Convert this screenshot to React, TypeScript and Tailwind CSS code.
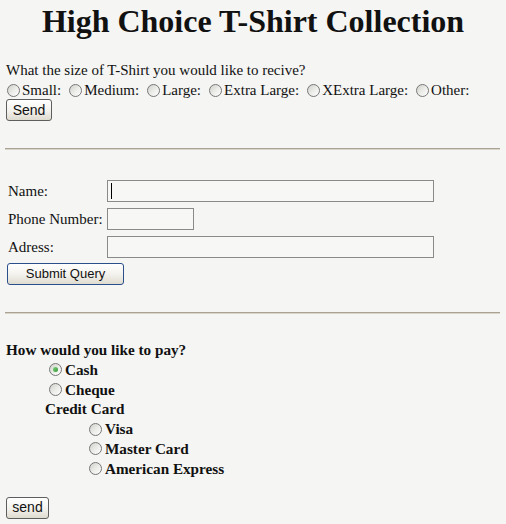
import React from "react";

const serif = { fontFamily: '"Liberation Serif", "Times New Roman", serif' };

function Radio({ checked = false }: { checked?: boolean }) {
  return (
    <span className="flex h-[13px] w-[13px] shrink-0 items-center justify-center rounded-full border border-[#777] bg-gradient-to-br from-[#cfcfcb] via-[#ebebe8] to-[#ffffff]">
      {checked ? (
        <span className="h-[5px] w-[5px] rounded-full bg-gradient-to-br from-[#7fd07f] to-[#2f9a2f]" />
      ) : null}
    </span>
  );
}

function XPButton({
  label,
  className,
  blue = false,
  size = "text-[14px]",
}: {
  label: string;
  className: string;
  blue?: boolean;
  size?: string;
}) {
  return (
    <div
      className={`flex items-center justify-center rounded-[3px] border bg-gradient-to-b from-[#ffffff] via-[#f4f3ee] to-[#dedbd0] text-[#111] ${size} ${
        blue ? "border-[#2a4f8a]" : "border-[#5e5e5e]"
      } ${className}`}
      style={{ fontFamily: '"Liberation Sans", Arial, sans-serif' }}
    >
      {label}
    </div>
  );
}

function TextBox({ className, caret = false }: { className: string; caret?: boolean }) {
  return (
    <div className={`flex h-[22px] items-center border border-[#8a8a8a] bg-[#f7f7f5] ${className}`}>
      {caret ? <span className="ml-[3px] h-[16px] w-[1px] bg-black" /> : null}
    </div>
  );
}

export default function App() {
  const sizes = ["Small:", "Medium:", "Large:", "Extra Large:", "XExtra Large:", "Other:"];
  return (
    <div className="min-h-[524px] w-[506px] bg-[#f5f5f3] px-[6px] text-[#111]" style={serif}>
      <h1 className="pt-[3px] text-center text-[32px] font-bold leading-[36px]">
        High Choice T-Shirt Collection
      </h1>

      <div className="mt-[21px] text-[15px] leading-[20px]">
        What the size of T-Shirt you would like to recive?
      </div>
      <div className="flex h-[20px] items-center pl-[1px] text-[15px] leading-[20px]">
        {sizes.map((s) => (
          <div key={s} className="mr-[8px] flex items-center">
            <Radio />
            <span className="ml-[2px] whitespace-pre">{s}</span>
          </div>
        ))}
      </div>
      <XPButton label="Send" className="mt-[-1px] h-[22px] w-[46px]" />

      <div className="mt-[27px] ml-[-1px] h-[2px] w-[495px] border-t border-[#aaa394] bg-[#d9d5ca]" />

      <div className="mt-[30px] flex flex-col gap-[6px] text-[15px]">
        <div className="flex h-[22px] items-center">
          <span className="ml-[2px] w-[99px]">Name:</span>
          <TextBox className="w-[327px]" caret />
        </div>
        <div className="flex h-[22px] items-center">
          <span className="ml-[2px] w-[99px] whitespace-nowrap">Phone Number:</span>
          <TextBox className="w-[87px]" />
        </div>
        <div className="flex h-[22px] items-center">
          <span className="ml-[2px] w-[99px]">Adress:</span>
          <TextBox className="w-[327px]" />
        </div>
      </div>
      <XPButton
        label="Submit Query"
        blue
        size="text-[13px]"
        className="mt-[5px] ml-[1px] h-[22px] w-[117px]"
      />

      <div className="mt-[27px] ml-[-1px] h-[2px] w-[495px] border-t border-[#aaa394] bg-[#d9d5ca]" />

      <div className="mt-[26px] text-[15.2px] font-bold leading-[19.8px]">
        <div>How would you like to pay?</div>
        <div className="flex h-[19.8px] items-center pl-[43px]">
          <Radio checked />
          <span className="ml-[3px]">Cash</span>
        </div>
        <div className="flex h-[19.8px] items-center pl-[43px]">
          <Radio />
          <span className="ml-[3px]">Cheque</span>
        </div>
        <div className="pl-[39px]">Credit Card</div>
        <div className="flex h-[19.8px] items-center pl-[83px]">
          <Radio />
          <span className="ml-[3px]">Visa</span>
        </div>
        <div className="flex h-[19.8px] items-center pl-[83px]">
          <Radio />
          <span className="ml-[3px]">Master Card</span>
        </div>
        <div className="flex h-[19.8px] items-center pl-[83px]">
          <Radio />
          <span className="ml-[3px]">American Express</span>
        </div>
      </div>
      <XPButton label="send" className="mt-[18px] h-[22px] w-[43px]" />
    </div>
  );
}
